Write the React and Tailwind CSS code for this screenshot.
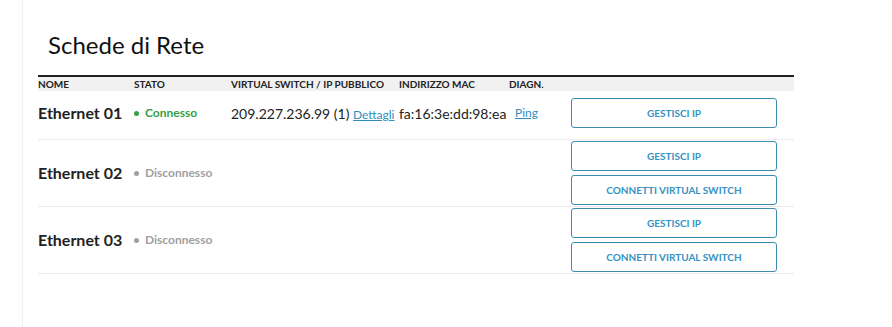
import React from 'react';

const nics = [
  { name: 'Ethernet 01', connected: true, ip: '209.227.236.99 (1)', mac: 'fa:16:3e:dd:98:ea' },
  { name: 'Ethernet 02', connected: false },
  { name: 'Ethernet 03', connected: false },
];

const ActionButton = ({ children }) => (
  <button className="w-[206px] h-[30px] rounded-[3px] border border-[#3b8db0] bg-white text-[10px] font-bold uppercase text-[#3592c2]">
    {children}
  </button>
);

const Status = ({ connected }) => (
  <div className={`flex items-center text-[12px] font-bold ${connected ? 'text-[#35a043]' : 'text-[#a0a0a0]'}`}>
    <span className={`w-[5px] h-[5px] rounded-full mr-[6px] ${connected ? 'bg-[#35a043]' : 'bg-[#a0a0a0]'}`} />
    {connected ? 'Connesso' : 'Disconnesso'}
  </div>
);

export default function App() {
  return (
    <div className="w-[892px] h-[327px] bg-white font-['Lato','Liberation_Sans',sans-serif] text-[#222]">
      <div className="ml-[22px] h-full border-l border-[#f0f0f0] pl-[15px] pt-[30px]">
        <h2 className="ml-[10px] text-[24px] leading-[30px] text-[#111]">Schede di Rete</h2>
        <div className="mt-[15px] w-[756px]">
          <div className="flex h-[16px] items-center border-t-2 border-[#222] bg-[#f1f1f1] text-[10px] font-bold uppercase">
            <div className="w-[96px]">Nome</div>
            <div className="w-[97px]">Stato</div>
            <div className="w-[168px]">Virtual Switch / IP Pubblico</div>
            <div className="w-[110px]">Indirizzo MAC</div>
            <div className="w-[62px]">Diagn.</div>
            <div className="flex-1" />
          </div>
          {nics.map((nic) => (
            <div
              key={nic.name}
              className={`flex items-center border-b border-[#ebebeb] ${nic.connected ? 'h-[49px] pb-[4px]' : 'h-[67px]'}`}
            >
              <div className="w-[96px] text-[16px] font-bold text-[#222]">{nic.name}</div>
              <div className="w-[97px]">
                <Status connected={nic.connected} />
              </div>
              <div className="w-[168px] text-[14px]">
                {nic.ip && (
                  <>
                    {nic.ip}{' '}
                    <a href="#" className="text-[12px] text-[#2f8ec0] underline">Dettagli</a>
                  </>
                )}
              </div>
              <div className="w-[110px] text-[14px]">{nic.mac}</div>
              <div className="w-[62px] pl-[6px] text-[12px]">
                {nic.connected && <a href="#" className="text-[#2f8ec0] underline">Ping</a>}
              </div>
              <div className="flex flex-1 flex-col gap-[4px]">
                <ActionButton>Gestisci IP</ActionButton>
                {!nic.connected && <ActionButton>Connetti Virtual Switch</ActionButton>}
              </div>
            </div>
          ))}
        </div>
      </div>
    </div>
  );
}
